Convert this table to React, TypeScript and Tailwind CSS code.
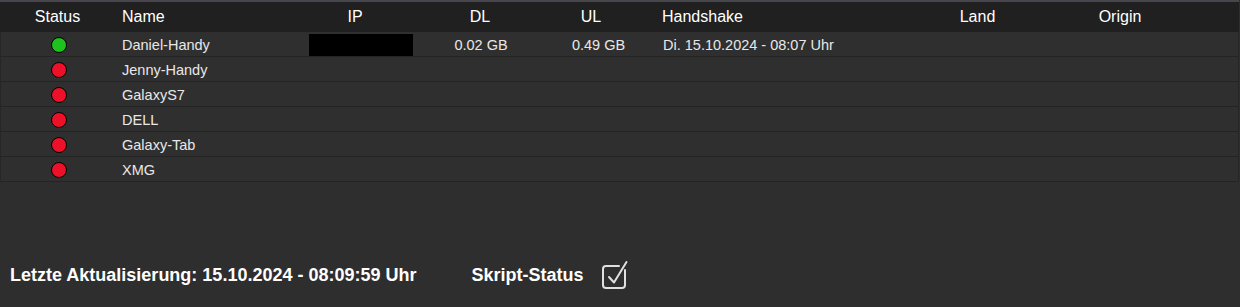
import React from "react";

type Row = { name: string; online: boolean; ip?: boolean; dl?: string; ul?: string; hs?: string };

const rows: Row[] = [
  { name: "Daniel-Handy", online: true, ip: true, dl: "0.02 GB", ul: "0.49 GB", hs: "Di. 15.10.2024 - 08:07 Uhr" },
  { name: "Jenny-Handy", online: false },
  { name: "GalaxyS7", online: false },
  { name: "DELL", online: false },
  { name: "Galaxy-Tab", online: false },
  { name: "XMG", online: false },
];

const cols = "grid grid-cols-[115px_185px_120px_120px_115px_250px_145px_140px_1fr]";

export default function App() {
  return (
    <div className="w-[1240px] h-[307px] bg-[#2e2e2e] text-[#e8e8e8] flex flex-col" style={{ fontFamily: '"Liberation Sans", Arial, sans-serif' }}>
      <div className="w-[1239px] border-t-2 border-[#47464c]">
        <div className={`${cols} h-[30px] items-center bg-[#202020] text-white text-[16px]`}>
          <div className="text-center">Status</div>
          <div className="pl-[7px]">Name</div>
          <div className="text-center pr-[10px]">IP</div>
          <div className="text-center">DL</div>
          <div className="text-center pr-[13px]">UL</div>
          <div className="pl-[7px]">Handshake</div>
          <div className="text-center">Land</div>
          <div className="text-center">Origin</div>
          <div></div>
        </div>
        <div className="border-l border-r border-[#262626]">
          {rows.map((r) => (
            <div key={r.name} className={`${cols} h-[25px] items-center bg-[#2f2f2f] border-b border-[#242424] text-[14.5px]`}>
              <div className="flex justify-center pt-[1px]">
                <span className={`block w-[16px] h-[16px] rounded-full border border-black ${r.online ? "bg-[#1dc21d]" : "bg-[#ec1129]"}`} />
              </div>
              <div className="pl-[6px] pt-[3px]">{r.name}</div>
              <div className="pl-[8px] pt-[1px]">{r.ip ? <div className="w-[104px] h-[22px] bg-black" /> : null}</div>
              <div className="text-center pt-[3px]">{r.dl ?? ""}</div>
              <div className="text-center pt-[3px]">{r.ul ?? ""}</div>
              <div className="pl-[7px] pt-[3px]">{r.hs ?? ""}</div>
              <div></div>
              <div></div>
              <div></div>
            </div>
          ))}
        </div>
      </div>
      <div className="flex items-center mt-[78px] pl-[10px] text-white font-bold text-[18px]">
        <span>Letzte Aktualisierung: 15.10.2024 - 08:09:59 Uhr</span>
        <span className="ml-[55px]">Skript-Status</span>
        <svg className="ml-[16px]" width="30" height="30" viewBox="0 0 30 30" fill="none" stroke="#e0e0e0" strokeWidth="2" strokeLinecap="round" strokeLinejoin="round">
          <path d="M25 10 V25 a3 3 0 0 1 -3 3 H6 a3 3 0 0 1 -3 -3 V9 a3 3 0 0 1 3 -3 H19" />
          <path d="M9 17 L14 22.5 L26.5 2" />
        </svg>
      </div>
    </div>
  );
}
